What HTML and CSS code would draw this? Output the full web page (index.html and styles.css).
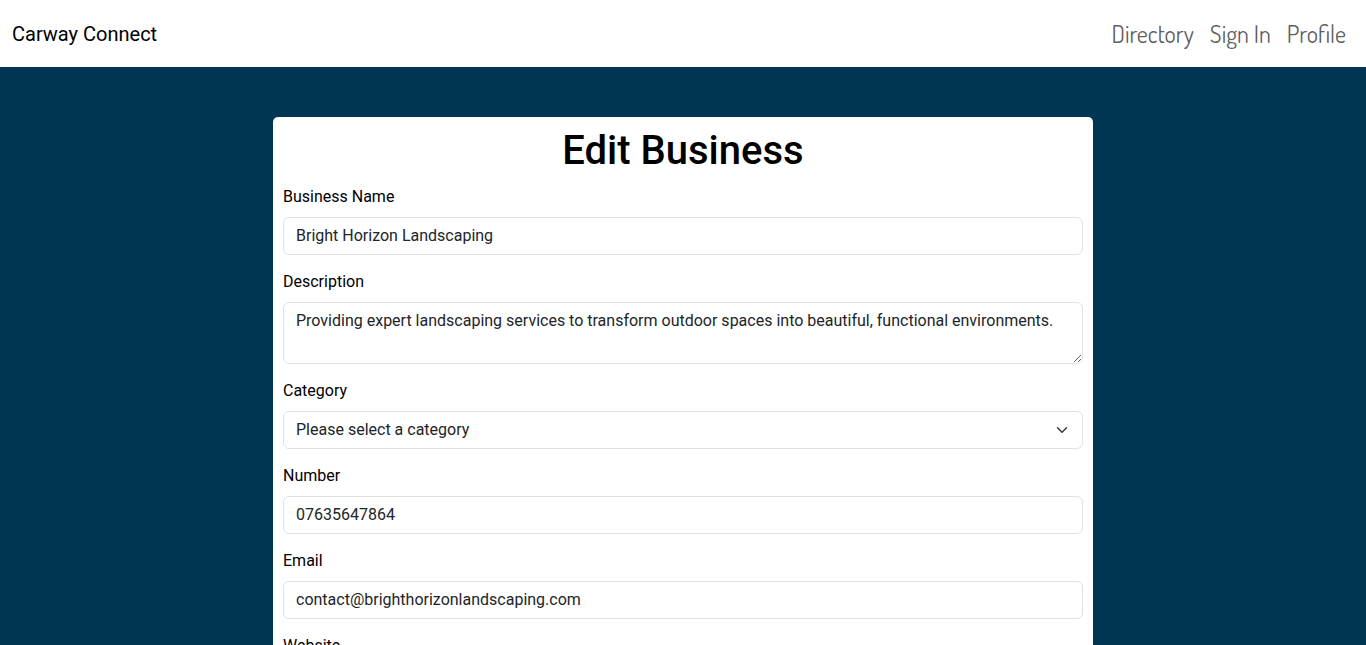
FILE: index.html
```html
<!DOCTYPE html>
<html lang="en">
<head>
  <meta charset="utf-8">
  <meta name="viewport" content="width=device-width, initial-scale=1">
  <title>Carway Connect</title>
  <link rel="stylesheet" href="styles.css">
</head>
<body>
  <header class="navbar">
    <a class="brand" href="#">Carway Connect</a>
    <nav class="nav-links">
      <a class="nav-link" href="#">Directory</a>
      <a class="nav-link" href="#">Sign In</a>
      <a class="nav-link" href="#">Profile</a>
    </nav>
  </header>
  <main class="page">
    <form class="card">
      <h1 class="title">Edit Business</h1>
      <div class="field">
        <label class="label" for="name">Business Name</label>
        <input class="control" id="name" type="text" value="Bright Horizon Landscaping">
      </div>
      <div class="field">
        <label class="label" for="description">Description</label>
        <textarea class="control area" id="description" rows="2">Providing expert landscaping services to transform outdoor spaces into beautiful, functional environments.</textarea>
      </div>
      <div class="field">
        <label class="label" for="category">Category</label>
        <div class="select-wrap">
          <select class="control select" id="category">
            <option>Please select a category</option>
          </select>
          <svg class="chevron" viewBox="0 0 16 16" aria-hidden="true"><path d="m2 5 6 6 6-6"/></svg>
        </div>
      </div>
      <div class="field">
        <label class="label" for="number">Number</label>
        <input class="control" id="number" type="tel" value="07635647864">
      </div>
      <div class="field">
        <label class="label" for="email">Email</label>
        <input class="control" id="email" type="email" value="contact@brighthorizonlandscaping.com">
      </div>
      <div class="field">
        <label class="label" for="website">Website</label>
        <input class="control" id="website" type="url">
      </div>
    </form>
  </main>
</body>
</html>
```

FILE: styles.css
```css
* {
  box-sizing: border-box;
}

html {
  scrollbar-width: none;
}

body {
  margin: 0;
  background: #003554;
  color: #000;
  font: 16px/24px Roboto, "Liberation Sans", sans-serif;
}

.navbar {
  display: flex;
  align-items: center;
  justify-content: space-between;
  padding: 8px 12px;
  background: #fff;
}

.brand {
  color: #000;
  font-size: 20px;
  line-height: 30px;
  text-decoration: none;
}

.nav-links {
  display: flex;
}

.nav-link {
  padding: 8px;
  color: rgba(0, 0, 0, 0.65);
  font-family: Dosis, "Open Sans", sans-serif;
  font-size: 24px;
  line-height: 35px;
  text-decoration: none;
}

.page {
  padding: 50px 16px;
}

.card {
  max-width: 820px;
  margin: 0 auto;
  padding: 10px;
  border-radius: 5px;
  background: #fff;
}

.title {
  margin: 0 0 11px;
  font-size: 40px;
  font-weight: 500;
  line-height: 48px;
  text-align: center;
}

.field {
  margin-bottom: 16px;
}

.label {
  display: block;
  margin-bottom: 10px;
  line-height: 21px;
}

.control {
  display: block;
  width: 100%;
  padding: 6px 12px;
  border: 1px solid #dee2e6;
  border-radius: 6px;
  background: #fff;
  color: #212529;
  font: inherit;
}

.area {
  resize: vertical;
}

.select-wrap {
  display: grid;
  align-items: center;
}

.select {
  grid-area: 1 / 1;
  appearance: none;
}

.chevron {
  grid-area: 1 / 1;
  justify-self: end;
  width: 16px;
  height: 12px;
  margin-right: 13px;
  fill: none;
  stroke: #343a40;
  stroke-width: 2;
  stroke-linecap: round;
  stroke-linejoin: round;
  pointer-events: none;
}
```
